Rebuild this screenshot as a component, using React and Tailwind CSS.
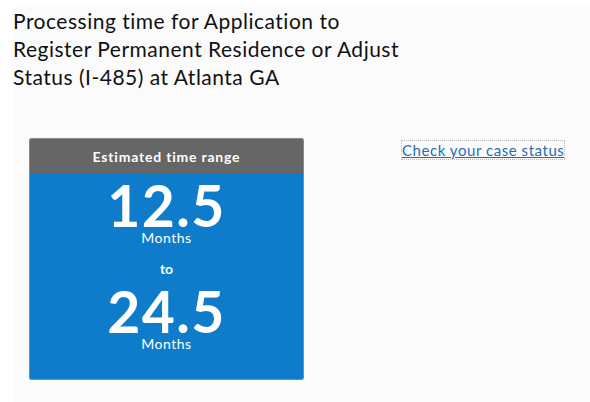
import React from 'react';

const App = () => {
  return (
    <div className="min-h-[402px] bg-white pl-[13px] pt-[7px] font-['Lato','Liberation_Sans',sans-serif]">
      <div className="min-h-[395px] bg-[#fbfbfb]">
        {/* Heading */}
        <h1 className="text-[21px] leading-[28px] tracking-[0.5px] text-[#111]">
          Processing time for Application to
          <br />
          Register Permanent Residence or Adjust
          <br />
          Status (I-485) at Atlanta GA
        </h1>

        <div className="mt-[47px] flex items-start">
          {/* Time range card */}
          <div className="ml-[16px] w-[275px] overflow-hidden rounded-[2px] border border-[#8a8a8a] text-center text-white">
            <div className="flex h-[34px] items-center justify-center bg-[#666666] text-[14px] font-bold tracking-[0.8px]">
              Estimated time range
            </div>
            <div className="flex h-[206px] flex-col items-center bg-[#0f7ccb] pt-[9px]">
              <div className="text-[57px] font-bold leading-[47px] tracking-[1.5px]">12.5</div>
              <div className="text-[14px] leading-[18px] tracking-[0.5px]">Months</div>
              <div className="mt-[13px] text-[14px] font-bold leading-[18px]">to</div>
              <div className="mt-[10px] text-[57px] font-bold leading-[47px] tracking-[1.5px]">24.5</div>
              <div className="text-[14px] leading-[18px] tracking-[0.5px]">Months</div>
            </div>
          </div>

          {/* Link */}
          <a
            href="#"
            className="ml-[98px] mt-[3px] text-[15px] leading-[18px] tracking-[0.55px] text-[#1f6fb2] underline outline-1 outline-dotted outline-[#bbb]"
          >
            Check your case status
          </a>
        </div>
      </div>
    </div>
  );
};

export default App;
